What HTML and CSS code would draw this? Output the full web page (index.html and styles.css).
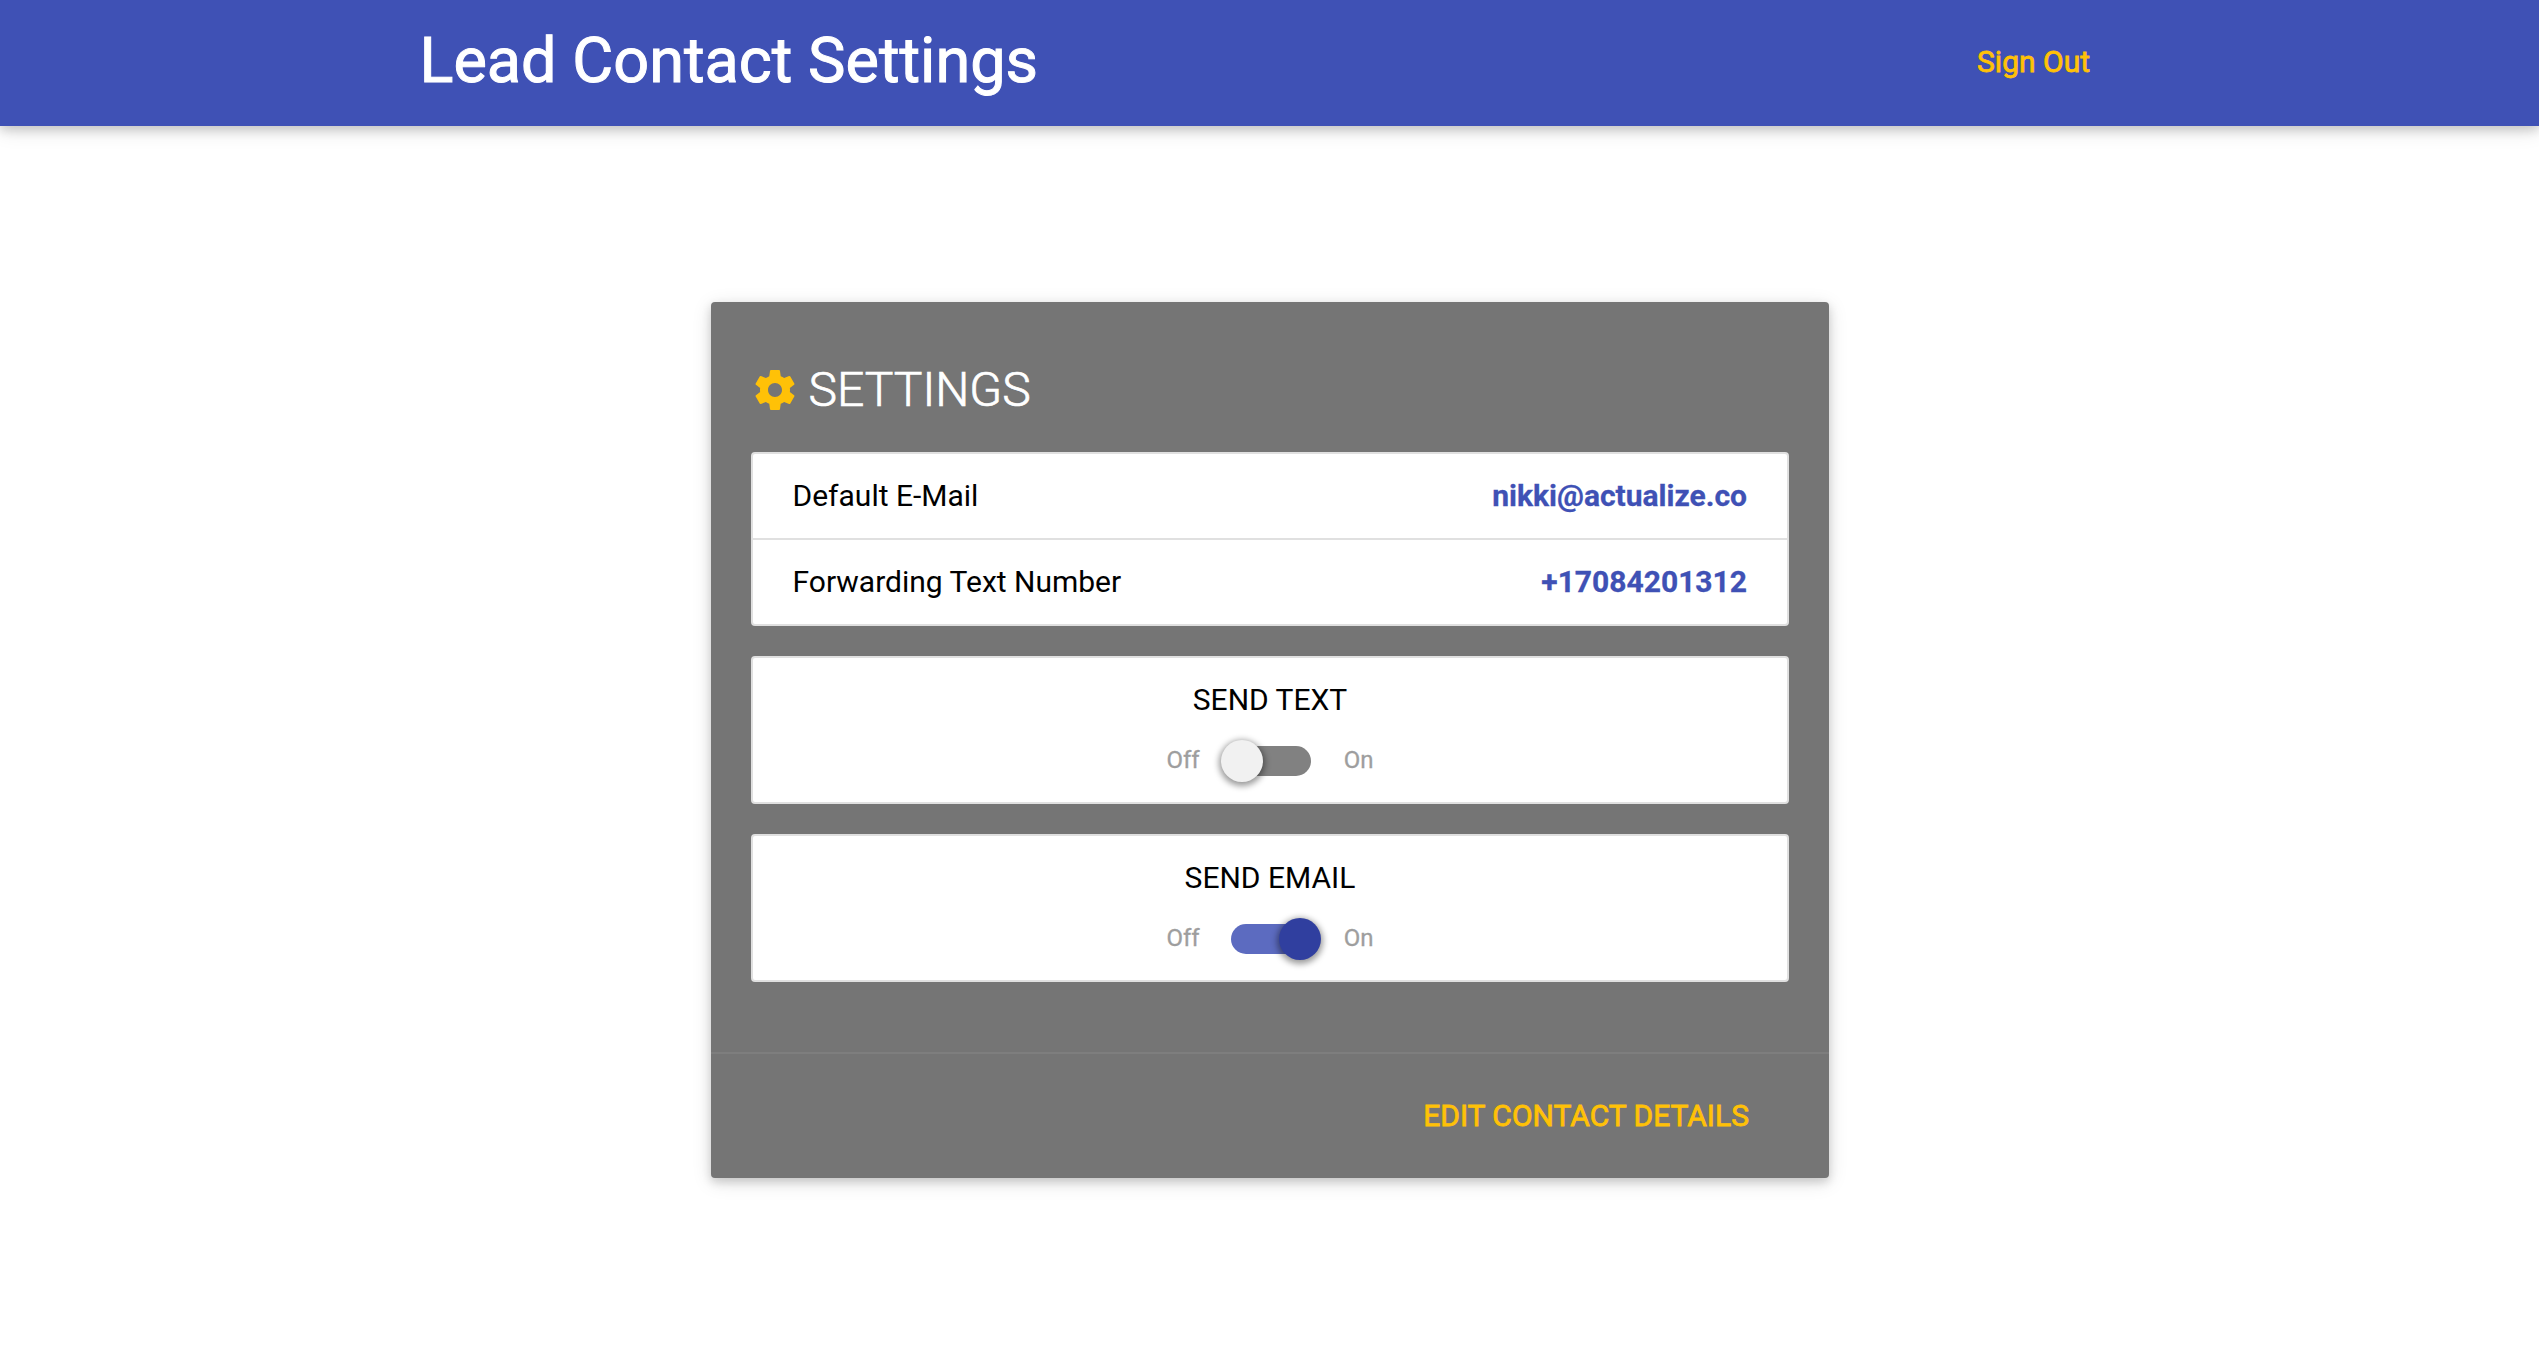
FILE: index.html
```html
<!DOCTYPE html>
<html lang="en">
<head>
<meta charset="utf-8">
<title>Lead Contact Settings</title>
<link rel="stylesheet" href="styles.css">
</head>
<body>
<nav class="navbar">
  <a class="brand">Lead Contact Settings</a>
  <a class="sign-out">Sign Out</a>
</nav>
<main class="card">
  <div class="card-content">
    <h1 class="card-title">
      <svg class="gear" viewBox="0 0 24 24"><path fill="currentColor" d="M19.43 12.98c.04-.32.07-.64.07-.98s-.03-.66-.07-.98l2.11-1.65c.19-.15.24-.42.12-.64l-2-3.46c-.12-.22-.39-.3-.61-.22l-2.49 1c-.52-.4-1.08-.73-1.69-.98l-.38-2.65C14.46 2.18 14.25 2 14 2h-4c-.25 0-.46.18-.49.42l-.38 2.65c-.61.25-1.17.59-1.69.98l-2.49-1c-.23-.09-.49 0-.61.22l-2 3.46c-.13.22-.07.49.12.64l2.11 1.65c-.04.32-.07.65-.07.98s.03.66.07.98l-2.11 1.65c-.19.15-.24.42-.12.64l2 3.46c.12.22.39.3.61.22l2.49-1c.52.4 1.08.73 1.69.98l.38 2.65c.03.24.24.42.49.42h4c.25 0 .46-.18.49-.42l.38-2.65c.61-.25 1.17-.59 1.69-.98l2.49 1c.23.09.49 0 .61-.22l2-3.46c.12-.22.07-.49-.12-.64l-2.11-1.65zM12 15.500c-1.930 0-3.500-1.570-3.500-3.500s1.570-3.500 3.500-3.500 3.500 1.570 3.500 3.500-1.570 3.500-3.500 3.500z"/></svg>
      <span>SETTINGS</span>
    </h1>
    <div class="panels">
      <dl class="panel">
        <div class="row"><dt>Default E-Mail</dt><dd>nikki@actualize.co</dd></div>
        <div class="row"><dt>Forwarding Text Number</dt><dd>+17084201312</dd></div>
      </dl>
      <section class="panel toggle">
        <h2 class="toggle-title">SEND TEXT</h2>
        <div class="switch"><span class="state">Off</span><span class="lever"></span><span class="state">On</span></div>
      </section>
      <section class="panel toggle">
        <h2 class="toggle-title">SEND EMAIL</h2>
        <div class="switch"><span class="state">Off</span><span class="lever lever-on"></span><span class="state">On</span></div>
      </section>
    </div>
  </div>
  <footer class="card-action"><a>EDIT CONTACT DETAILS</a></footer>
</main>
</body>
</html>
```
FILE: styles.css
```css
* { box-sizing: border-box; }

body {
  margin: 0;
  background: #fff;
  color: #000;
  font: 400 30px Roboto, sans-serif;
  min-height: 1347px;
}

h1, h2, dl, dt, dd { margin: 0; font-weight: inherit; }

.navbar {
  display: flex;
  align-items: center;
  justify-content: space-between;
  height: 126px;
  padding: 0 449px 2px 419.5px;
  background: #3f51b5;
  box-shadow: 0 4px 10px rgba(0, 0, 0, .16), 0 4px 20px rgba(0, 0, 0, .12);
}

.brand {
  padding-bottom: 3px;
  color: #fff;
  font-size: 63px;
  -webkit-text-stroke: 1px currentColor;
}

.sign-out {
  padding-bottom: 2px;
  color: #ffc107;
  -webkit-text-stroke: .8px currentColor;
}

.card {
  width: 1118px;
  margin: 176px 0 0 711px;
  border-radius: 4px;
  background: #757575;
  box-shadow: 0 4px 10px rgba(0, 0, 0, .16), 0 4px 20px rgba(0, 0, 0, .12);
}

.card-content { height: 750px; padding: 40px; }

.card-title {
  display: flex;
  align-items: center;
  gap: 10px;
  height: 96px;
  margin-bottom: 14px;
  color: #fff;
  font-size: 48px;
  font-weight: 300;
}

.card-title span {
  padding-bottom: 2px;
  -webkit-text-stroke: .7px currentColor;
}

.gear { width: 48px; height: 48px; margin-left: -.5px; color: #ffc107; }

.panels { display: flex; flex-direction: column; gap: 30px; }

.panel {
  border: 2px solid #e0e0e0;
  border-radius: 4px;
  background: #fff;
}

.row {
  display: flex;
  align-items: center;
  justify-content: space-between;
  height: 84px;
  padding: 0 40px 2px 39.5px;
}

.row + .row { height: 86px; border-top: 2px solid #e0e0e0; }
.row dd { color: #3f51b5; font-weight: 700; -webkit-text-stroke: .3px currentColor; }

.toggle { height: 148px; padding-top: 19px; text-align: center; }
.toggle-title { font-size: 30px; line-height: 45px; }

.switch {
  display: flex;
  align-items: center;
  justify-content: center;
  height: 30px;
  margin-top: 24px;
  color: #9e9e9e;
  font-size: 24px;
}

.state { padding-bottom: 2px; -webkit-text-stroke: .3px currentColor; }

.lever {
  position: relative;
  width: 80px;
  height: 30px;
  margin: 0 33px 0 31px;
  border-radius: 15px;
  background: #818181;
}

.lever::after {
  content: "";
  position: absolute;
  top: -6px;
  left: -10px;
  width: 42px;
  height: 42px;
  border-radius: 50%;
  background: #f1f1f1;
  box-shadow: 0 2px 6px 2px rgba(0, 0, 0, .4);
}

.lever-on { background: #5c6bc0; }
.lever-on::after { left: 48px; background: #303f9f; }

.card-action {
  display: flex;
  align-items: center;
  justify-content: flex-end;
  height: 126px;
  padding: 0 80px 2px 0;
  border-top: 2px solid #7e7e7e;
  color: #ffc107;
  -webkit-text-stroke: .8px currentColor;
}
```
